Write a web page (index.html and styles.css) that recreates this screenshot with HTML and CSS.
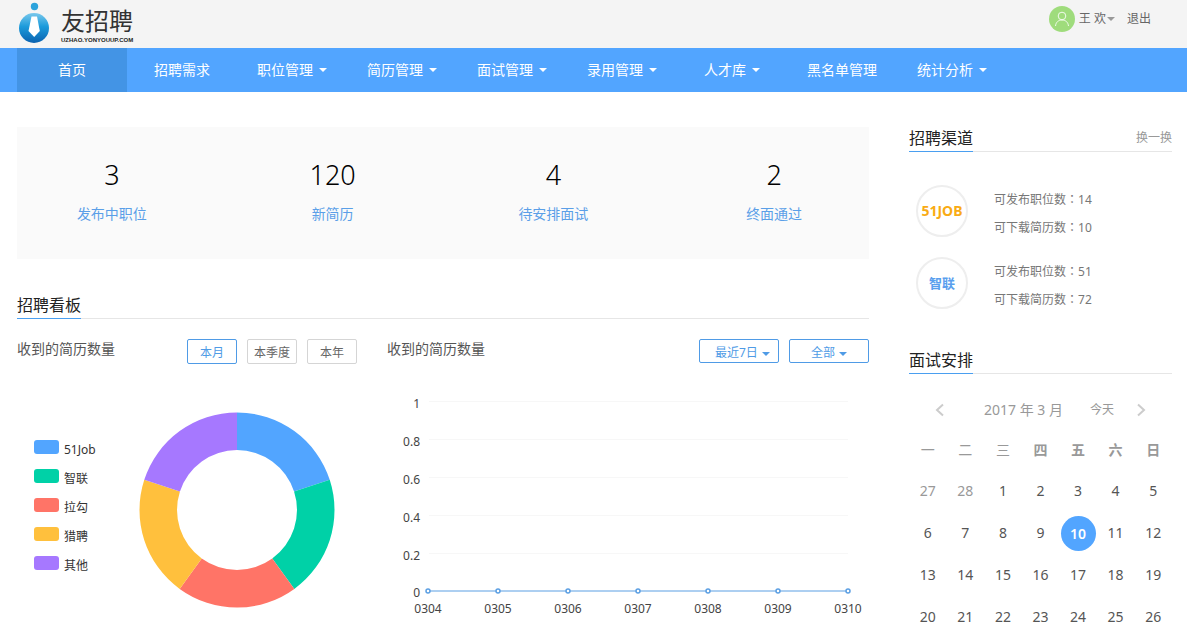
FILE: index.html
```html
<!DOCTYPE html>
<html lang="zh-CN">
<head>
    <meta charset="UTF-8">
    <meta name="viewport" content="width=device-width, initial-scale=1.0">
    <title>友招聘</title>
    <link rel="stylesheet" href="styles.css">
</head>
<body>

    <header class="topbar">
        <a href="#" class="logo">
            <svg class="logo-icon" width="34" height="44" viewBox="0 0 34 44">
                <defs>
                    <linearGradient id="logoFill" x1="0" y1="0" x2="0" y2="1">
                        <stop offset="0" stop-color="#79c8ec"/>
                        <stop offset="0.45" stop-color="#1c9bdb"/>
                        <stop offset="1" stop-color="#0a62b0"/>
                    </linearGradient>
                </defs>
                <circle cx="17" cy="28" r="15" fill="url(#logoFill)"/>
                <circle cx="17.500" cy="6.500" r="3.700" fill="#2ba3dc"/>
                <path d="M14.500 16.500L20 16.500L22.800 31L17.200 37L11.500 31Z" fill="#fff"/>
            </svg>
            <span class="logo-text">
                <span class="logo-name">友招聘</span>
                <span class="logo-domain">UZHAO.YONYOUUP.COM</span>
            </span>
        </a>
        <div class="user">
            <svg class="avatar" width="26" height="26" viewBox="0 0 26 26">
                <circle cx="13" cy="13" r="13" fill="#9fdc7c"/>
                <g fill="none" stroke="#fff" stroke-opacity="0.850">
                    <circle cx="13" cy="10" r="3.800"/>
                    <path d="M6.500 20C7 16 9.500 14 13 14S19 16 19.500 20"/>
                </g>
            </svg>
            <button type="button" class="user-name">王 欢<span class="caret"></span></button>
            <a href="#" class="logout">退出</a>
        </div>
    </header>

    <nav class="nav">
        <a href="#" class="nav-item active">首页</a>
        <a href="#" class="nav-item">招聘需求</a>
        <a href="#" class="nav-item">职位管理<span class="caret"></span></a>
        <a href="#" class="nav-item">简历管理<span class="caret"></span></a>
        <a href="#" class="nav-item">面试管理<span class="caret"></span></a>
        <a href="#" class="nav-item">录用管理<span class="caret"></span></a>
        <a href="#" class="nav-item">人才库<span class="caret"></span></a>
        <a href="#" class="nav-item">黑名单管理</a>
        <a href="#" class="nav-item">统计分析<span class="caret"></span></a>
    </nav>

    <div class="page">
        <main class="content">
            <div class="stats">
                <a href="#" class="stat"><span class="stat-num">3</span><span class="stat-label">发布中职位</span></a>
                <a href="#" class="stat"><span class="stat-num">120</span><span class="stat-label">新简历</span></a>
                <a href="#" class="stat"><span class="stat-num">4</span><span class="stat-label">待安排面试</span></a>
                <a href="#" class="stat"><span class="stat-num">2</span><span class="stat-label">终面通过</span></a>
            </div>

            <div class="section-head board-head">
                <h2>招聘看板</h2>
            </div>

            <div class="board">
                <section class="panel pie-panel">
                    <div class="panel-head">
                        <h3>收到的简历数量</h3>
                        <div class="panel-tools">
                            <button type="button" class="tab active">本月</button>
                            <button type="button" class="tab">本季度</button>
                            <button type="button" class="tab">本年</button>
                        </div>
                    </div>
                    <div class="pie-body">
                        <ul class="legend">
                            <li><i class="swatch blue"></i>51Job</li>
                            <li><i class="swatch green"></i>智联</li>
                            <li><i class="swatch red"></i>拉勾</li>
                            <li><i class="swatch yellow"></i>猎聘</li>
                            <li><i class="swatch purple"></i>其他</li>
                        </ul>
                        <svg class="donut" width="196" height="196" viewBox="-98 -98 196 196">
                            <path fill="#52a5ff" d="M0 -97.500A97.500 97.500 0 0 1 92.730 -30.130L57.060 -18.540A60 60 0 0 0 0 -60Z"/>
                            <path fill="#00d1a7" d="M92.730 -30.130A97.500 97.500 0 0 1 57.310 78.880L35.270 48.540A60 60 0 0 0 57.060 -18.540Z"/>
                            <path fill="#ff7467" d="M57.310 78.880A97.500 97.500 0 0 1 -57.310 78.880L-35.270 48.540A60 60 0 0 0 35.270 48.540Z"/>
                            <path fill="#ffc03d" d="M-57.310 78.880A97.500 97.500 0 0 1 -92.730 -30.130L-57.060 -18.540A60 60 0 0 0 -35.270 48.540Z"/>
                            <path fill="#a678ff" d="M-92.730 -30.130A97.500 97.500 0 0 1 0 -97.500L0 -60A60 60 0 0 0 -57.060 -18.540Z"/>
                        </svg>
                    </div>
                </section>

                <section class="panel line-panel">
                    <div class="panel-head">
                        <h3>收到的简历数量</h3>
                        <div class="panel-tools">
                            <select class="filter filter-range" aria-label="时间范围">
                                <option>最近7日</option>
                            </select>
                            <select class="filter filter-channel" aria-label="渠道">
                                <option>全部</option>
                            </select>
                        </div>
                    </div>
                    <svg class="line-chart" viewBox="0 0 482 236">
                        <g class="grid-lines">
                            <path d="M42 17.500H461M42 55.500H461M42 93.500H461M42 131.500H461M42 169.500H461"/>
                        </g>
                        <g class="y-labels">
                            <text x="33" y="24">1</text>
                            <text x="33" y="62">0.8</text>
                            <text x="33" y="100">0.6</text>
                            <text x="33" y="138">0.4</text>
                            <text x="33" y="176">0.2</text>
                            <text x="33" y="213">0</text>
                        </g>
                        <path class="series" d="M41 207H461"/>
                        <g class="points">
                            <circle cx="41" cy="207" r="2"/>
                            <circle cx="111" cy="207" r="2"/>
                            <circle cx="181" cy="207" r="2"/>
                            <circle cx="251" cy="207" r="2"/>
                            <circle cx="321" cy="207" r="2"/>
                            <circle cx="391" cy="207" r="2"/>
                            <circle cx="461" cy="207" r="2"/>
                        </g>
                        <g class="x-labels">
                            <text x="41" y="229">0304</text>
                            <text x="111" y="229">0305</text>
                            <text x="181" y="229">0306</text>
                            <text x="251" y="229">0307</text>
                            <text x="321" y="229">0308</text>
                            <text x="391" y="229">0309</text>
                            <text x="461" y="229">0310</text>
                        </g>
                    </svg>
                </section>
            </div>
        </main>

        <aside class="sidebar">
            <section>
                <div class="section-head">
                    <h2>招聘渠道</h2>
                    <button type="button" class="refresh">换一换</button>
                </div>
                <div class="channel-list">
                    <div class="channel">
                        <span class="channel-logo job51">51JOB</span>
                        <div class="channel-info">
                            <p>可发布职位数<span class="colon" lang="zh-TW">：</span>14</p>
                            <p>可下载简历数<span class="colon" lang="zh-TW">：</span>10</p>
                        </div>
                    </div>
                    <div class="channel">
                        <span class="channel-logo zhilian">智联</span>
                        <div class="channel-info">
                            <p>可发布职位数<span class="colon" lang="zh-TW">：</span>51</p>
                            <p>可下载简历数<span class="colon" lang="zh-TW">：</span>72</p>
                        </div>
                    </div>
                </div>
            </section>

            <section>
                <div class="section-head schedule-head">
                    <h2>面试安排</h2>
                </div>
                <div class="cal-head">
                    <button type="button" class="cal-arrow" aria-label="上个月">
                        <svg width="10" height="14" viewBox="0 0 10 14"><path d="M8 1.500L2 7L8 12.500"/></svg>
                    </button>
                    <span class="cal-title">2017 年 3 月</span>
                    <button type="button" class="cal-today">今天</button>
                    <button type="button" class="cal-arrow" aria-label="下个月">
                        <svg width="10" height="14" viewBox="0 0 10 14"><path d="M2 1.500L8 7L2 12.500"/></svg>
                    </button>
                </div>
                <table class="calendar">
                    <thead>
                        <tr><th>一</th><th>二</th><th>三</th><th>四</th><th>五</th><th>六</th><th>日</th></tr>
                    </thead>
                    <tbody>
                        <tr><td class="other">27</td><td class="other">28</td><td>1</td><td>2</td><td>3</td><td>4</td><td>5</td></tr>
                        <tr><td>6</td><td>7</td><td>8</td><td>9</td><td><span class="today">10</span></td><td>11</td><td>12</td></tr>
                        <tr><td>13</td><td>14</td><td>15</td><td>16</td><td>17</td><td>18</td><td>19</td></tr>
                        <tr><td>20</td><td>21</td><td>22</td><td>23</td><td>24</td><td>25</td><td>26</td></tr>
                    </tbody>
                </table>
            </section>
        </aside>
    </div>

</body>
</html>
```
FILE: styles.css
```css
* {
    box-sizing: border-box;
}

body {
    margin: 0;
    background-color: #fff;
    color: #555;
    font-family: "Noto Sans", "Noto Sans CJK SC", sans-serif;
    font-size: 14px;
    line-height: 20px;
}

h2, h3, p, ul {
    margin: 0;
    padding: 0;
}

a {
    color: inherit;
    text-decoration: none;
}

button {
    padding: 0;
    border: 0;
    background: none;
    color: inherit;
    font: inherit;
    cursor: pointer;
}

.caret {
    display: inline-block;
    border-top: 4px solid;
    border-left: 4px solid transparent;
    border-right: 4px solid transparent;
}

/* header */
.topbar {
    display: flex;
    justify-content: space-between;
    height: 48px;
    padding: 0 36px 0 17px;
    background-color: #f4f4f4;
}

.logo {
    display: flex;
    gap: 10px;
    color: #333;
}

.logo-text {
    display: flex;
    flex-direction: column;
    padding-top: 6px;
}

.logo-name {
    font-size: 24px;
    line-height: 30px;
}

.logo-domain {
    font-family: "Liberation Sans", Arial, sans-serif;
    font-size: 6px;
    font-weight: bold;
    line-height: 8px;
    color: #222;
}

.user {
    display: flex;
    align-items: center;
    height: 37px;
    font-size: 12px;
    color: #666;
}

.avatar {
    margin-right: 4px;
}

.user-name .caret {
    margin-left: 1px;
    vertical-align: middle;
    color: #999;
}

.logout {
    margin-left: 12px;
}

/* navigation */
.nav {
    display: flex;
    padding: 0 17px;
    background-color: #52a5ff;
    color: #fff;
}

.nav-item {
    display: flex;
    align-items: center;
    justify-content: center;
    width: 110px;
    height: 44px;
}

.nav-item .caret {
    margin-left: 6px;
}

.nav-item.active,
.nav-item:hover {
    background-color: #4394e5;
}

/* layout */
.page {
    display: flex;
    gap: 40px;
    padding: 33px 15px 0 17px;
}

.content {
    flex: 1;
    min-width: 0;
}

.sidebar {
    flex: 0 0 263px;
}

.section-head {
    display: flex;
    justify-content: space-between;
    border-bottom: 1px solid #e6e6e6;
}

.section-head h2 {
    margin-bottom: -1px;
    border-bottom: 1px solid #4a9ff0;
    color: #222;
    font-size: 16px;
    font-weight: normal;
    line-height: 26px;
}

.refresh {
    color: #999;
    font-size: 12px;
}

/* stats */
.stats {
    display: grid;
    grid-template-columns: repeat(4, 1fr);
    gap: 31px;
    margin-top: 2px;
    padding: 29px 0 35px;
    background-color: #fafafa;
    text-align: center;
}

.stat-num,
.stat-label {
    display: block;
}

.stat-num {
    color: #000;
    font-size: 27px;
    font-weight: 300;
    line-height: 38px;
}

.stat-label {
    margin-top: 10px;
    color: #5a9fe8;
}

/* board */
.board-head {
    margin-top: 33px;
}

.board {
    display: flex;
    gap: 30px;
    padding-top: 20px;
}

.pie-panel {
    flex: 0 0 340px;
}

.line-panel {
    flex: 1;
    min-width: 0;
}

.panel-head {
    display: flex;
    justify-content: space-between;
    height: 25px;
}

.panel-head h3 {
    font-size: 14px;
    font-weight: normal;
}

.panel-tools {
    display: flex;
    gap: 10px;
}

.tab {
    width: 50px;
    height: 25px;
    padding-top: 2px;
    border: 1px solid #d5d5d5;
    border-radius: 2px;
    color: #666;
    font-size: 12px;
}

.tab.active {
    border-color: #4f9be6;
    color: #4f9be6;
}

.filter {
    width: 80px;
    height: 24px;
    padding: 2px 0 0 15px;
    border: 1px solid #4f9be6;
    border-radius: 2px;
    appearance: none;
    background: url("data:image/svg+xml,%3Csvg xmlns='http://www.w3.org/2000/svg' width='8' height='4'%3E%3Cpath d='M0 0h8L4 4z' fill='%234f9be6'/%3E%3C/svg%3E") no-repeat 62px 12px;
    color: #4f9be6;
    font-family: inherit;
    font-size: 12px;
}

.filter-channel {
    padding-left: 21px;
    background-position: 49px 12px;
}

.pie-body {
    display: flex;
    justify-content: space-between;
    padding: 48px 22px 0 17px;
}

.legend {
    padding-top: 28px;
    color: #333;
    font-size: 12px;
    list-style: none;
}

.legend li {
    display: flex;
    gap: 5px;
    height: 29px;
}

.swatch {
    width: 25px;
    height: 14px;
    border-radius: 3px;
}

.swatch.blue { background-color: #52a5ff; }
.swatch.green { background-color: #00d1a7; }
.swatch.red { background-color: #ff7467; }
.swatch.yellow { background-color: #ffc03d; }
.swatch.purple { background-color: #a678ff; }

.line-chart {
    display: block;
    width: 100%;
    margin-top: 20px;
    font-size: 12px;
    fill: #444;
}

.grid-lines {
    stroke: #f7f7f7;
}

.y-labels {
    text-anchor: end;
}

.x-labels {
    text-anchor: middle;
}

.series {
    stroke: #5b9fe3;
}

.points {
    fill: #fff;
    stroke: #5b9fe3;
    stroke-width: 1.5;
}

/* channels */
.channel-list {
    display: grid;
    gap: 20px;
    margin-top: 33px;
    padding-left: 7px;
}

.channel {
    display: flex;
    gap: 26px;
    height: 52px;
}

.channel-logo {
    width: 52px;
    border: 2px solid #eee;
    border-radius: 50%;
    font-size: 13px;
    font-weight: bold;
    line-height: 48px;
    text-align: center;
}

.job51 {
    color: #f9ab14;
    font-size: 14px;
}

.zhilian {
    color: #5a9fee;
}

.channel-info {
    color: #777;
    font-size: 12px;
    line-height: 27px;
}

.colon {
    font-family: "Noto Sans CJK TC", sans-serif;
}

/* calendar */
.schedule-head {
    margin-top: 38px;
}

.cal-head {
    display: flex;
    align-items: center;
    height: 40px;
    margin-top: 16px;
    padding: 0 26px;
    color: #999;
}

.cal-arrow {
    width: 10px;
    height: 14px;
}

.cal-arrow svg {
    display: block;
    fill: none;
    stroke: #ccc;
    stroke-width: 2;
}

.cal-title {
    margin: 0 27px 0 auto;
}

.cal-today {
    margin-right: 22px;
    font-size: 12px;
}

.calendar {
    width: 100%;
    border-collapse: collapse;
    table-layout: fixed;
    text-align: center;
}

.calendar th {
    height: 40px;
    padding: 0;
    color: #999;
}

.calendar th:nth-child(-n+3) {
    font-weight: normal;
}

.calendar td {
    height: 42px;
    padding: 0;
}

.calendar .other {
    color: #999;
}

.today {
    display: block;
    width: 35px;
    height: 35px;
    margin: 0 auto;
    border-radius: 50%;
    background-color: #52a5ff;
    color: #fff;
    font-weight: 600;
    line-height: 35px;
}
```
